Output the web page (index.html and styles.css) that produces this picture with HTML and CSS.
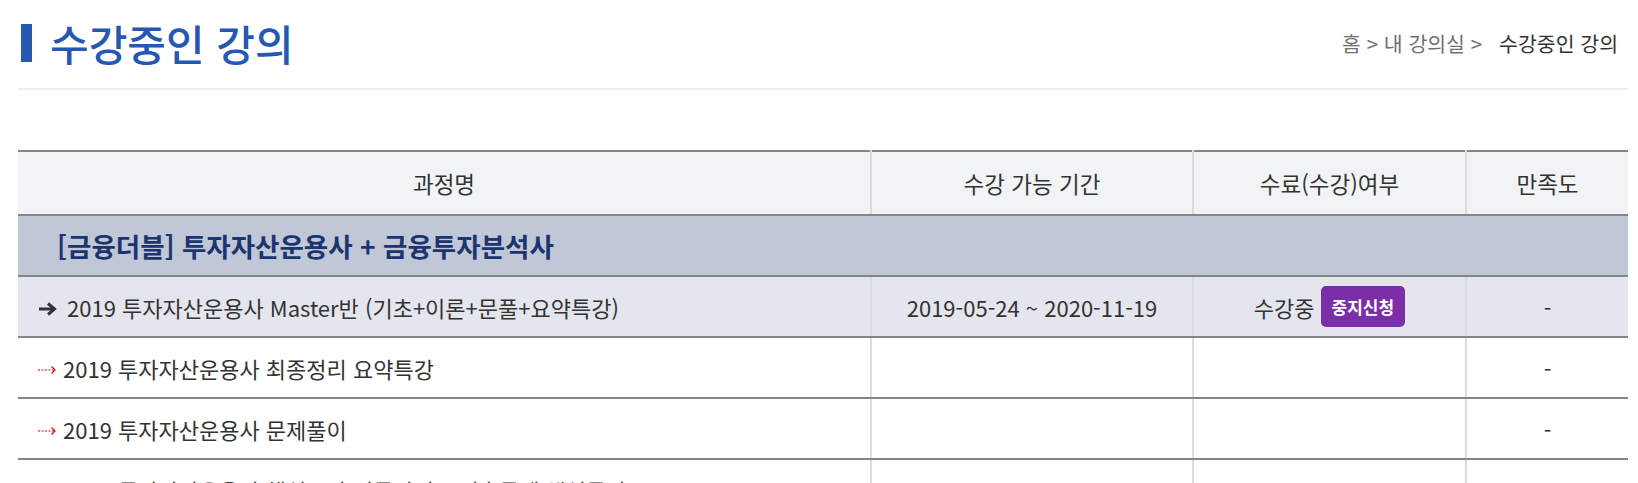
FILE: index.html
```html
<!DOCTYPE html>
<html lang="ko">
<head>
<meta charset="utf-8">
<title>수강중인 강의</title>
<link rel="stylesheet" href="styles.css">
</head>
<body>
<div class="page">
  <div class="page-head">
    <h1 class="page-title">수강중인 강의</h1>
    <div class="crumbs"><span class="crumb-path">홈 &gt; 내 강의실 &gt;</span><span class="crumb-current">수강중인 강의</span></div>
  </div>

  <table class="course-table">
    <colgroup>
      <col class="c-name"><col class="c-period"><col class="c-status"><col class="c-rate">
    </colgroup>
    <thead>
      <tr>
        <th>과정명</th>
        <th>수강 가능 기간</th>
        <th>수료(수강)여부</th>
        <th>만족도</th>
      </tr>
    </thead>
    <tbody>
      <tr class="group-row">
        <td class="group-name" colspan="4">[금융더블] 투자자산운용사 + 금융투자분석사</td>
      </tr>
      <tr class="main-row">
        <td class="name main-name"><svg class="arrow-main" width="19" height="14" viewBox="0 0 19 14"><path d="M1 7H15" stroke="#333" stroke-width="3" fill="none"/><path d="M10 1.5L16.5 7L10 12.5" stroke="#333" stroke-width="3" fill="none" stroke-linejoin="miter"/></svg>2019 투자자산운용사 Master반 (기초+이론+문풀+요약특강)</td>
        <td class="center">2019-05-24 ~ 2020-11-19</td>
        <td class="center"><span class="status">수강중</span><button class="stop-btn" type="button">중지신청</button></td>
        <td class="center">-</td>
      </tr>
      <tr>
        <td class="name"><svg class="arrow-sub" width="19" height="12" viewBox="0 0 19 12"><path d="M0 6H16" stroke="#d00" stroke-width="1.2" stroke-dasharray="2 1.5" fill="none"/><path d="M13.5 2.5L17 6L13.5 9.5" stroke="#d00" stroke-width="1.2" fill="none"/></svg>2019 투자자산운용사 최종정리 요약특강</td>
        <td></td><td></td>
        <td class="center">-</td>
      </tr>
      <tr>
        <td class="name"><svg class="arrow-sub" width="19" height="12" viewBox="0 0 19 12"><path d="M0 6H16" stroke="#d00" stroke-width="1.2" stroke-dasharray="2 1.5" fill="none"/><path d="M13.5 2.5L17 6L13.5 9.5" stroke="#d00" stroke-width="1.2" fill="none"/></svg>2019 투자자산운용사 문제풀이</td>
        <td></td><td></td>
        <td class="center">-</td>
      </tr>
      <tr>
        <td class="name"><svg class="arrow-sub" width="19" height="12" viewBox="0 0 19 12"><path d="M0 6H16" stroke="#d00" stroke-width="1.2" stroke-dasharray="2 1.5" fill="none"/><path d="M13.5 2.5L17 6L13.5 9.5" stroke="#d00" stroke-width="1.2" fill="none"/></svg>2019 투자자산운용사 핵심요약 이론강의 + 기출문제 해설특강</td>
        <td></td><td></td>
        <td class="center">-</td>
      </tr>
    </tbody>
  </table>
</div>
</body>
</html>
```

FILE: styles.css
```css
* { box-sizing: border-box; }
html, body { margin: 0; padding: 0; background: #fff; }
body {
  font-family: "Noto Sans CJK KR", "Noto Sans", sans-serif;
  color: #333;
}
.page {
  padding: 0 10px 0 18px;
}
.page-head {
  display: flex;
  align-items: center;
  justify-content: space-between;
  height: 90px;
  padding: 0 10px 2px 3px;
  border-bottom: 2px solid #ededed;
}
.page-title {
  margin: 0;
  display: flex;
  align-items: center;
  gap: 18px;
  font-size: 42px;
  font-weight: 500;
  color: #2458b3;
  line-height: 1;
}
.page-title::before {
  content: "";
  display: block;
  width: 11px;
  height: 38px;
  background: #2458b3;
}
.crumbs {
  font-size: 20.5px;
  display: flex;
  gap: 17px;
}
.crumb-path { color: #707070; }
.crumb-current { color: #333; }

.course-table {
  margin-top: 60px;
  width: 100%;
  border-collapse: collapse;
  table-layout: fixed;
  font-size: 22px;
}
.c-name { width: 853px; }
.c-period { width: 322px; }
.c-status { width: 273px; }
.course-table th,
.course-table td {
  height: 61px;
  padding: 0;
  border-bottom: 2px solid #858585;
  border-left: 2px solid #dcdcdc;
  vertical-align: middle;
}
.course-table th:first-child,
.course-table td:first-child { border-left: none; }
.course-table thead tr { border-top: 2px solid #858585; }
.course-table th {
  height: 64px;
  background: #f2f3f5;
  font-weight: 400;
  font-size: 22.5px;
  color: #333;
  text-align: center;
}
.group-row td { background: #c0c7d6; }
.group-name {
  padding-left: 39px !important;
  font-size: 26.5px;
  font-weight: 700;
  color: #1c3570;
  white-space: nowrap;
}
.main-row td { background: #e4e5ed; }
.name {
  padding-left: 20px !important;
  white-space: nowrap;
}
.main-name svg { margin-right: 10px; }
.arrow-main, .arrow-sub { vertical-align: middle; position: relative; top: -2px; }
.arrow-sub { margin-right: 6px; }
.center { text-align: center; }
.status { vertical-align: middle; }
.stop-btn {
  margin-left: 6px;
  vertical-align: middle;
  font-family: inherit;
  font-size: 17px;
  font-weight: 700;
  color: #fff;
  background: #7a2fa8;
  border: none;
  border-radius: 5px;
  padding: 0 11px;
  height: 41px;
}
```
